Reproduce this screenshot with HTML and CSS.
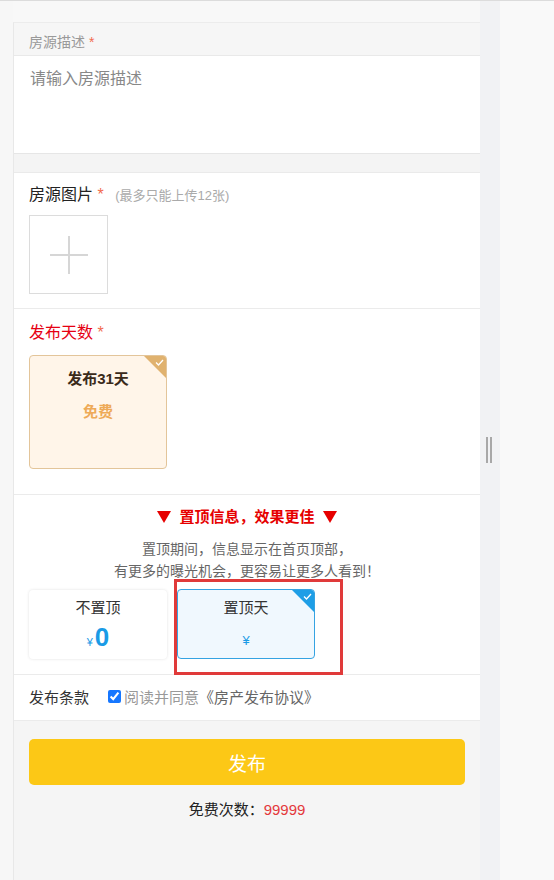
FILE: index.html
```html
<!DOCTYPE html>
<html lang="zh-CN">
<head>
<meta charset="utf-8">
<title>发布房源</title>
<link rel="stylesheet" href="styles.css">
</head>
<body>
<div class="top-line"></div>
<div class="page">
  <div class="gutter"></div>
  <main class="panel">
    <section class="desc">
      <div class="desc-label">房源描述 <span class="star">*</span></div>
      <div class="desc-input">请输入房源描述</div>
    </section>
    <div class="gap"></div>
    <section class="block photos">
      <div class="title">房源图片 <span class="star">*</span> <span class="hint">(最多只能上传12张)</span></div>
      <div class="upload">
        <svg width="40" height="40" viewBox="0 0 40 40"><path d="M20 1V39M1 20H39" stroke="#d6d6d6" stroke-width="2" fill="none"/></svg>
      </div>
    </section>
    <section class="block days">
      <div class="title red">发布天数 <span class="star">*</span></div>
      <div class="day-card">
        <span class="corner gold"><svg width="9" height="7" viewBox="0 0 9 7"><path d="M1 3.5L3.5 6L8 1" stroke="#fff" stroke-width="1.3" fill="none"/></svg></span>
        <div class="day-name">发布31天</div>
        <div class="day-price">免费</div>
      </div>
    </section>
    <section class="block top">
      <div class="top-title"><span class="tri"></span><span class="tt-text">置顶信息，效果更佳</span><span class="tri"></span></div>
      <div class="top-desc">置顶期间，信息显示在首页顶部，<br>有更多的曝光机会，更容易让更多人看到！</div>
      <div class="top-cards">
        <div class="top-card">
          <div class="tc-name">不置顶</div>
          <div class="tc-price"><span class="yen">¥</span><span class="num">0</span></div>
        </div>
        <div class="top-card active">
          <span class="corner blue"><svg width="9" height="7" viewBox="0 0 9 7"><path d="M1 3.5L3.5 6L8 1" stroke="#fff" stroke-width="1.3" fill="none"/></svg></span>
          <div class="tc-name">置顶天</div>
          <div class="tc-price low"><span class="yen big">¥</span></div>
        </div>
      </div>
      <div class="annot"></div>
    </section>
    <section class="block terms">
      <span class="terms-label">发布条款</span>
      <label class="agree"><input type="checkbox" checked><span class="grey">阅读并同意</span><span class="doc">《房产发布协议》</span></label>
    </section>
    <div class="actions">
      <button class="submit" type="button">发布</button>
      <div class="count">免费次数：<span class="red-num">99999</span></div>
    </div>
  </main>
  <div class="splitter"><span class="handle"></span></div>
  <div class="rest"></div>
</div>
</body>
</html>
```
FILE: styles.css
```css
* { box-sizing: border-box; }
html, body { margin: 0; padding: 0; }
body {
  background: #f8f8f8;
  font-family: "Liberation Sans", "Noto Sans CJK SC", sans-serif;
  color: #333;
  height: 880px;
  overflow: hidden;
}
.top-line { height: 1px; background: #dcdcdc; }
.page {
  display: flex;
  height: 879px;
}
.gutter { width: 13px; background: #f7f7f7; }
.panel {
  width: 467px;
  margin-top: 21px;
  background: #f5f5f5;
  border-left: 1px solid #e8e8e8;
  border-top: 1px solid #ececec;
  display: flex;
  flex-direction: column;
}
.splitter {
  width: 20px;
  background: #f1f2f4;
  position: relative;
}
.handle {
  position: absolute;
  left: 6px;
  top: 436px;
  width: 6px;
  height: 26px;
  border-left: 2px solid #a8a8a8;
  border-right: 2px solid #a8a8a8;
}
.rest { flex: 1; background: #f9f9f9; }

.star { color: #f26b4f; }
.desc-label {
  height: 33px;
  padding: 9px 0 0 15px;
  font-size: 14px;
  line-height: 20px;
  color: #999;
  background: #f6f6f6;
  border-bottom: 1px solid #e9e9e9;
}
.desc-input {
  height: 98px;
  background: #fff;
  padding: 12px 0 0 16px;
  font-size: 16px;
  line-height: 22px;
  color: #888;
  border-bottom: 1px solid #e6e6e6;
}
.gap { height: 19px; background: #f4f4f4; border-bottom: 1px solid #eaeaea; }

.block { background: #fff; padding-left: 15px; border-bottom: 1px solid #ebebeb; position: relative; }
.title { font-size: 16px; line-height: 22px; color: #222; }
.title.red { color: #e60012; }
.hint { font-size: 13px; color: #aaa; margin-left: 7px; }

.photos { height: 136px; padding-top: 11px; }
.upload {
  margin-top: 8px;
  width: 79px;
  height: 79px;
  border: 1px solid #dcdcdc;
  display: flex;
  align-items: center;
  justify-content: center;
}

.days { height: 186px; padding-top: 13px; }
.day-card {
  position: relative;
  overflow: hidden;
  margin-top: 11px;
  width: 138px;
  height: 114px;
  background: #fff5e9;
  border: 1px solid #e3c59a;
  border-radius: 4px;
  text-align: center;
}
.day-name { margin-top: 12px; font-size: 15px; line-height: 22px; font-weight: bold; color: #3a2a1a; }
.day-price { margin-top: 11px; font-size: 15px; line-height: 22px; font-weight: bold; color: #eeaa58; }

.corner {
  position: absolute;
  top: 0;
  right: 0;
  width: 0;
  height: 0;
  border-top: 22px solid #e0b26f;
  border-left: 22px solid transparent;
}
.corner.blue { border-top-color: #1e9ee6; }
.corner svg { position: absolute; top: -19px; right: 2px; }

.top { height: 180px; padding-top: 11px; padding-left: 15px; }
.top-title {
  display: flex;
  align-items: center;
  justify-content: center;
  gap: 8px;
  font-size: 15px;
  line-height: 22px;
  font-weight: bold;
  color: #e60000;
  padding-right: 15px;
}
.tri {
  width: 0;
  height: 0;
  border-left: 7px solid transparent;
  border-right: 7px solid transparent;
  border-top: 12px solid #e60000;
}
.top-desc { margin-top: 10px; text-align: center; font-size: 14px; line-height: 22px; color: #666; padding-right: 15px; }
.top-cards { display: flex; gap: 10px; margin-top: 8px; }
.top-card {
  position: relative;
  overflow: hidden;
  width: 138px;
  height: 69px;
  background: #fff;
  border-radius: 4px;
  box-shadow: 0 0 3px rgba(0,0,0,0.12);
  text-align: center;
}
.top-card.active {
  background: #f0f8fe;
  border: 1px solid #35a3e2;
  box-shadow: none;
  height: 70px;
  margin-top: -1px;
}
.tc-name { margin-top: 7px; font-size: 15px; line-height: 22px; color: #333; }
.tc-price { color: #1a9be6; line-height: 30px; margin-top: 3px; }
.tc-price.low { margin-top: 6px; }
.yen { font-size: 11px; }
.yen.big { font-size: 13px; }
.num { font-size: 26px; font-weight: bold; margin-left: 2px; }

.annot {
  position: absolute;
  left: 160px;
  top: 84px;
  width: 169px;
  height: 96px;
  border: 3px solid #e03a3a;
}

.terms { height: 46px; display: flex; align-items: center; padding-bottom: 2px; }
.terms-label { font-size: 15px; color: #333; }
.agree { display: flex; align-items: center; margin-left: 19px; font-size: 15px; }
.agree input { margin: 0 3px 0 0; width: 13px; height: 13px; accent-color: #1677ff; }
.grey { color: #999; }
.doc { color: #666; }

.actions { padding: 18px 15px 0 15px; display: flex; flex-direction: column; align-items: center; }
.submit {
  width: 436px;
  height: 46px;
  border: none;
  border-radius: 5px;
  background: #fcc816;
  color: #fff;
  font-family: inherit;
  font-size: 19px;
}
.count { margin-top: 15px; font-size: 15px; line-height: 20px; color: #222; }
.red-num { color: #e4393c; }
```
